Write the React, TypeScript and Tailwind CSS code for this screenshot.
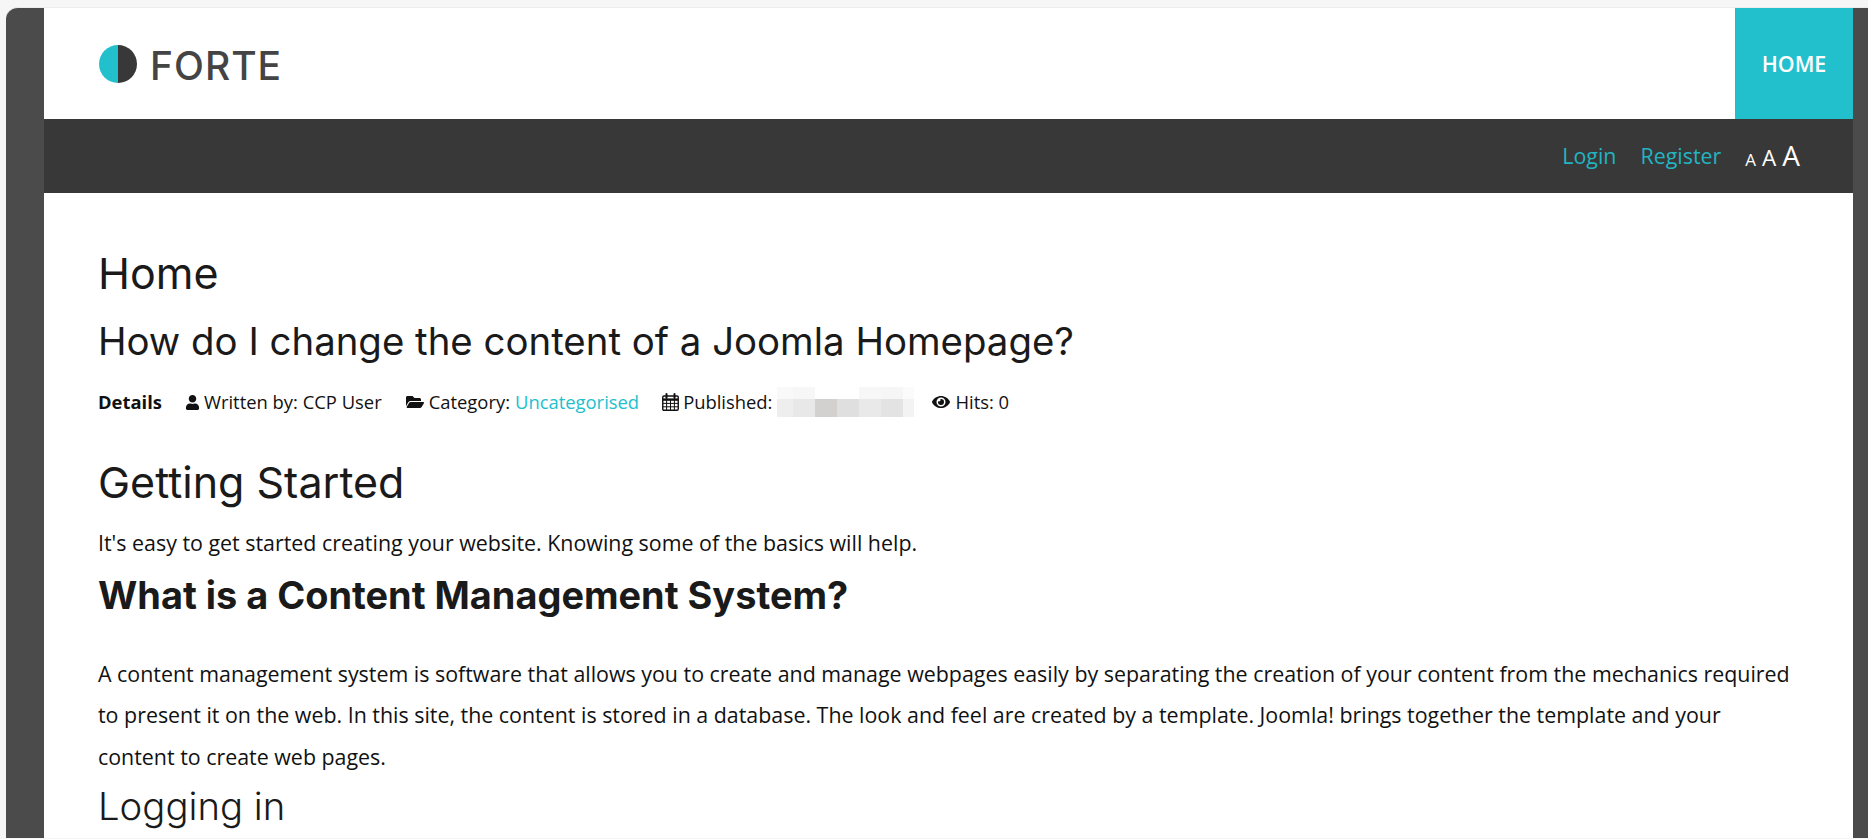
import React from "react";
import { FaUser, FaFolderOpen, FaEye } from "react-icons/fa";

const heading = { fontFamily: "Inter, sans-serif" };

function Blur() {
  const top = ["#f9f9f9", "#f7f7f7", "#ffffff", "#ffffff", "#f7f7f7", "#f6f6f6", "#fbfbfb"];
  const bottom = ["#eeeeee", "#e8e8e8", "#d2d1cf", "#dfdfdf", "#e9e9e9", "#e3e3e3", "#f3f3f3"];
  const widths = [16, 22, 22, 22, 22, 22, 11];
  return (
    <span className="inline-flex flex-col align-middle ml-[1px]">
      <span className="flex h-[12px]">
        {top.map((c, i) => (
          <span key={i} className="block h-full" style={{ background: c, width: widths[i] }} />
        ))}
      </span>
      <span className="flex h-[18px]">
        {bottom.map((c, i) => (
          <span key={i} className="block h-full" style={{ background: c, width: widths[i] }} />
        ))}
      </span>
    </span>
  );
}

function CalendarIcon() {
  return (
    <svg width="17" height="18" viewBox="0 0 17 18" fill="none" stroke="#111">
      <rect x="0.75" y="3" width="15.5" height="14.25" rx="1.2" strokeWidth="1.4" />
      <path d="M1 6.6h15" strokeWidth="2.4" />
      <path d="M4.6 7v10M8.5 7v10M12.4 7v10M1 10.4h15M1 13.8h15" strokeWidth="1" />
      <path d="M4.5 1v4M12.5 1v4" strokeWidth="2" strokeLinecap="round" />
    </svg>
  );
}

export default function App() {
  return (
    <div className="h-[839px] overflow-hidden bg-[#f6f6f6] pt-2 pl-[6px] font-['Open_Sans',sans-serif] text-[#111]">
      <div className="h-full rounded-tl-[12px] bg-[#4b4b4b] pl-[38px] pr-[15px] border-t border-[#ececec] -mt-px">
        <div className="h-full bg-white">
          <header className="flex h-[111px] items-stretch justify-between pl-[55px]">
            <div className="flex items-center gap-[13px] pt-[1px]">
              <svg width="38" height="38" viewBox="0 0 38 38">
                <path d="M19 0a19 19 0 0 0 0 38z" fill="#22c0cd" />
                <path d="M19 0a19 19 0 0 1 0 38z" fill="#383838" />
              </svg>
              <span className="text-[39px] font-medium leading-none tracking-[1px] text-[#444] pt-[2px]" style={{ fontFamily: "Inter, sans-serif" }}>
                FORTE
              </span>
            </div>
            <nav className="flex w-[118px] items-center justify-center bg-[#22c0cd] pt-[1px] text-[21.4px] font-semibold text-white">
              HOME
            </nav>
          </header>
          <div className="flex h-[74px] items-center justify-end gap-[24px] bg-[#383838] pr-[53px] text-[21.4px] text-[#22b4c2]">
            <a>Login</a>
            <a>Register</a>
            <div className="flex items-baseline gap-[6px] pb-[2px] text-white">
              <span className="text-[17px]">A</span>
              <span className="text-[22.5px]">A</span>
              <span className="text-[28px]">A</span>
            </div>
          </div>
          <main className="px-[54px] pt-[50px]">
            <h1 className="text-[43px] leading-[60px] text-[#1a1a1a]" style={heading}>Home</h1>
            <h2 className="mt-[8px] text-[38.4px] leading-[60px] text-[#1a1a1a]" style={heading}>
              How do I change the content of a Joomla Homepage?
            </h2>
            <div className="mt-[16px] flex items-center text-[18.4px] leading-[30px]">
              <span className="mr-[23px] font-bold">Details</span>
              <span className="mr-[24px] flex items-center gap-[4px]"><FaUser size={15} />Written by: CCP User</span>
              <span className="mr-[23px] flex items-center gap-[5px]"><FaFolderOpen size={18} />Category: <span className="text-[#22c0cd]">Uncategorised</span></span>
              <span className="mr-[18px] flex items-center gap-[4px]"><CalendarIcon />Published:<Blur /></span>
              <span className="flex items-center gap-[5px]"><FaEye size={18} />Hits: 0</span>
            </div>
            <h2 className="mt-[35px] text-[43px] leading-[60px] text-[#1a1a1a]" style={heading}>Getting Started</h2>
            <p className="mt-[10px] text-[21.4px] leading-[41.6px]">It's easy to get started creating your website. Knowing some of the basics will help.</p>
            <h3 className="mt-[1px] text-[37.9px] font-bold leading-[60px] text-[#1a1a1a]" style={heading}>What is a Content Management System?</h3>
            <p className="mt-[28px] text-[21.4px] leading-[41.6px]">
              A content management system is software that allows you to create and manage webpages easily by separating the creation of your content from the mechanics required to present it on the web. In this site, the content is stored in a database. The look and feel are created by a template. Joomla! brings together the template and your content to create web pages.
            </p>
            <h2 className="-mt-px text-[38.3px] font-light leading-[60px] text-[#1a1a1a]" style={heading}>Logging in</h2>
          </main>
        </div>
      </div>
    </div>
  );
}
